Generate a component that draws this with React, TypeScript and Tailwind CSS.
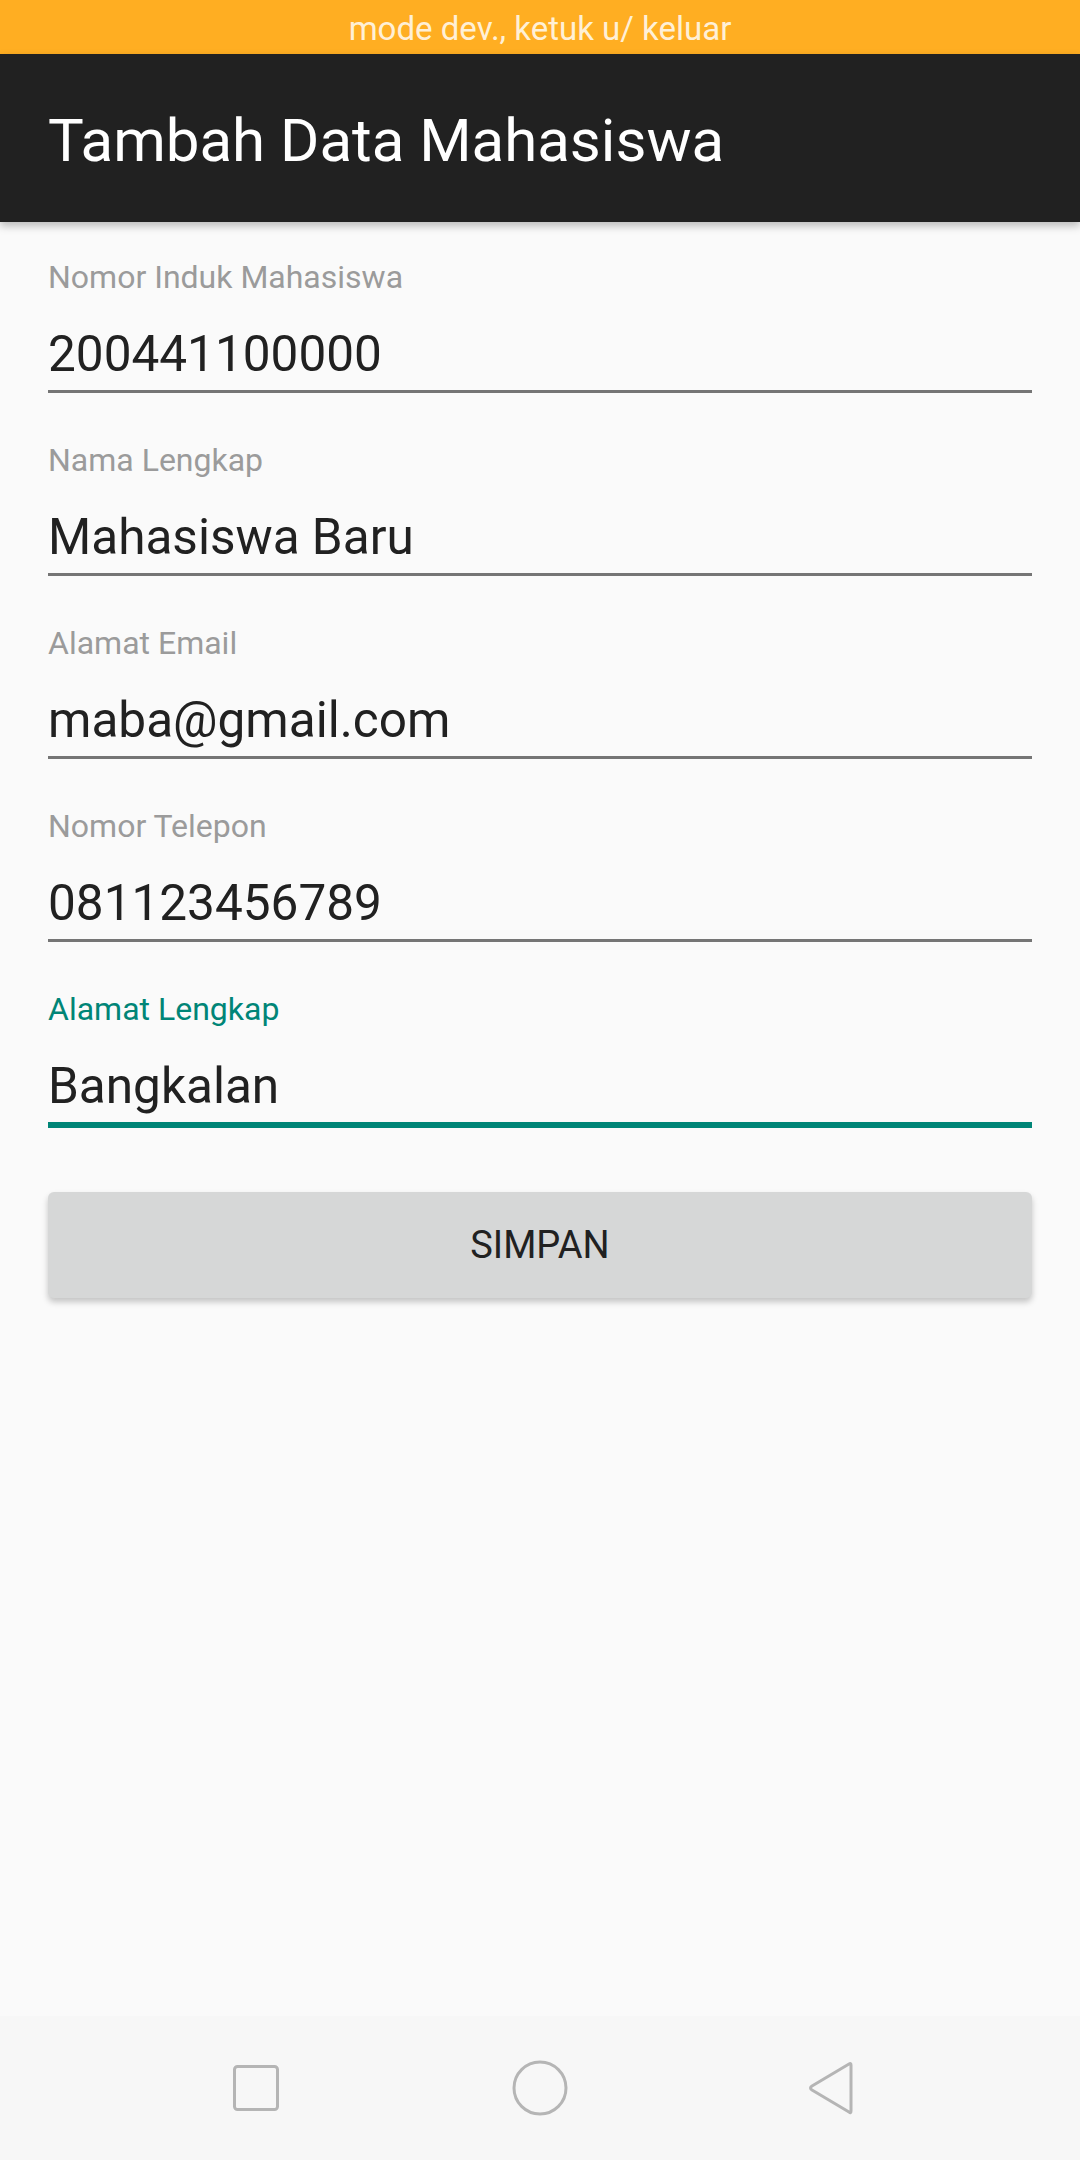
import React from "react";

type FieldProps = {
  label: string;
  value: string;
  focused?: boolean;
};

function Field({ label, value, focused }: FieldProps) {
  return (
    <div className="flex flex-col">
      <label
        className={
          focused
            ? "text-[32px] leading-[38px] text-[#008577]"
            : "text-[32px] leading-[38px] text-[#9b9b9b]"
        }
      >
        {label}
      </label>
      <div className="mt-[29px] text-[49.5px] leading-[58px] text-[#212121]">{value}</div>
      <div
        className={
          focused ? "mt-[7px] h-[6px] bg-[#008577]" : "mt-[7px] h-[3px] bg-[#757575]"
        }
      />
    </div>
  );
}

export default function App() {
  return (
    <div className="flex h-[2160px] w-full flex-col bg-[#fafafa] font-['Roboto',sans-serif]">
      <div className="flex h-[54px] items-center justify-center bg-[#ffae22] pt-[3px] text-[33px] leading-[40px] text-[#fff0d6]">
        mode dev., ketuk u/ keluar
      </div>

      <header className="relative z-10 flex h-[168px] items-center bg-[#212121] px-[48px] pt-[6px] text-[60px] leading-[70px] text-white shadow-[0_4px_8px_rgba(0,0,0,0.25)]">
        Tambah Data Mahasiswa
      </header>

      <main className="flex-1 px-[48px] pt-[36px]">
        <div className="flex flex-col gap-[48px]">
          <Field label="Nomor Induk Mahasiswa" value="200441100000" />
          <Field label="Nama Lengkap" value="Mahasiswa Baru" />
          <Field label="Alamat Email" value="maba@gmail.com" />
          <Field label="Nomor Telepon" value="081123456789" />
          <Field label="Alamat Lengkap" value="Bangkalan" focused />
        </div>

        <button className="mt-[64px] flex h-[106px] w-full items-center justify-center rounded-[6px] bg-[#d6d7d7] text-[38px] text-[#212121] shadow-[0_4px_6px_rgba(0,0,0,0.22)]">
          SIMPAN
        </button>
      </main>

      <nav className="grid h-[144px] grid-cols-3 items-center bg-[#f7f7f7] px-[108px]">
        <div className="flex justify-center pl-[8px]">
          <svg width="46" height="46" viewBox="0 0 46 46" fill="none">
            <rect x="1.5" y="1.5" width="43" height="43" rx="3" stroke="#b5b5b5" strokeWidth="3" />
          </svg>
        </div>
        <div className="flex justify-center">
          <svg width="56" height="56" viewBox="0 0 56 56" fill="none">
            <circle cx="28" cy="28" r="26" stroke="#b5b5b5" strokeWidth="3" />
          </svg>
        </div>
        <div className="flex justify-center pl-[8px]">
          <svg width="50" height="54" viewBox="0 0 50 54" fill="none">
            <path
              d="M44 4 L44 50 Q44 53 42 51 L5 29 Q2 27 5 25 L42 3 Q44 1.5 44 4 Z"
              stroke="#b5b5b5"
              strokeWidth="3"
              strokeLinejoin="round"
            />
          </svg>
        </div>
      </nav>
    </div>
  );
}
